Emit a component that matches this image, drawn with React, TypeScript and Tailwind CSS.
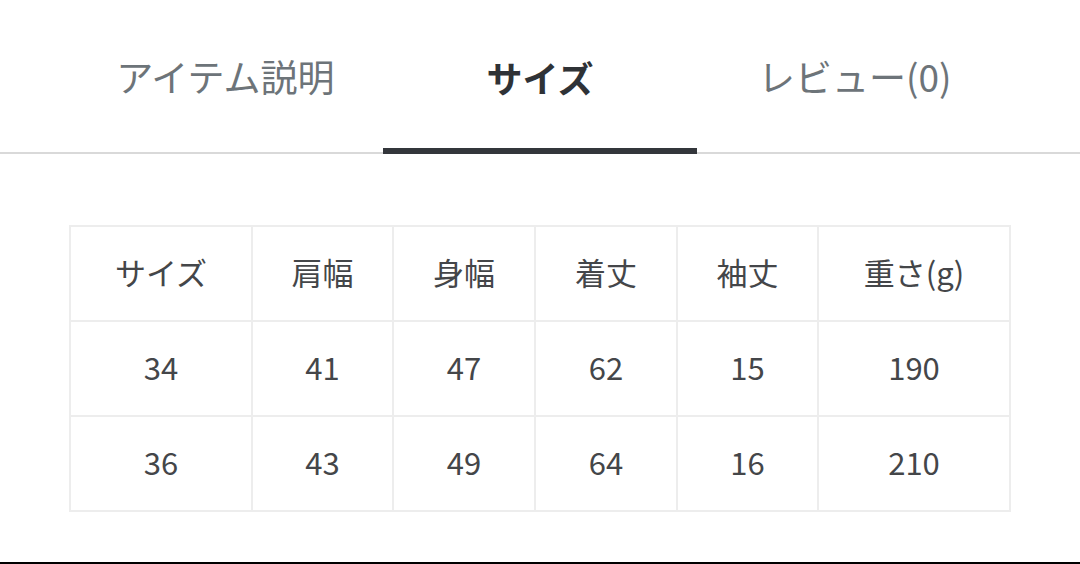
import React from "react";

const cols = [182, 141, 142, 142, 141, 192];
const header = ["サイズ", "肩幅", "身幅", "着丈", "袖丈", "重さ(g)"];
const rows = [
  ["34", "41", "47", "62", "15", "190"],
  ["36", "43", "49", "64", "16", "210"],
];

export default function App() {
  return (
    <div className="w-[1080px] h-[564px] bg-white border-b-2 border-black font-['Noto_Sans_CJK_JP','Noto_Sans',sans-serif] overflow-hidden">
      <div className="flex px-[68px] h-[154px] border-b-2 border-[#d9d9d9]">
        <div className="flex-1 flex items-center justify-center pt-[2px] text-[37px] text-[#6d7479]">
          アイテム説明
        </div>
        <div className="relative flex-1 flex items-center justify-center pt-[2px] text-[36px] font-bold text-[#2f3236]">
          サイズ
          <div className="absolute left-0 right-0 bottom-[-2px] h-[6px] bg-[#33363b]" />
        </div>
        <div className="flex-1 flex items-center justify-center pt-[2px] text-[37px] text-[#6d7479]">
          レビュー(0)
        </div>
      </div>
      <div className="px-[69px] pt-[71px]">
        <table className="table-fixed border-collapse w-[942px] text-[31px] text-[#444649]">
          <colgroup>
            {cols.map((w, i) => (
              <col key={i} style={{ width: w }} />
            ))}
          </colgroup>
          <tbody>
            <tr className="h-[95px]">
              {header.map((h, i) => (
                <td key={i} className="border-2 border-[#ededed] text-center align-middle pb-[2px]">
                  {h}
                </td>
              ))}
            </tr>
            {rows.map((r, ri) => (
              <tr key={ri} className="h-[95px]">
                {r.map((c, i) => (
                  <td key={i} className="border-2 border-[#ededed] text-center align-middle pb-[2px]">
                    {c}
                  </td>
                ))}
              </tr>
            ))}
          </tbody>
        </table>
      </div>
    </div>
  );
}
